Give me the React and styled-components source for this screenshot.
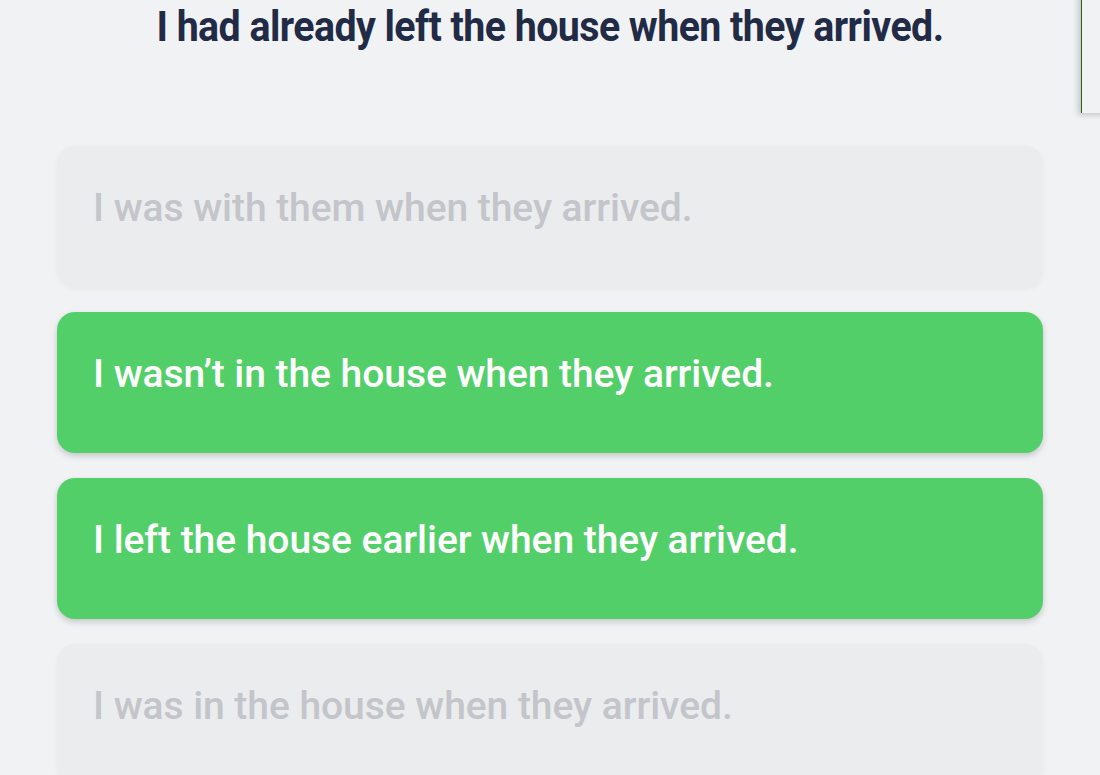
import React from "react";
import styled, { createGlobalStyle } from "styled-components";

const Global = createGlobalStyle`
  html, body { margin: 0; padding: 0; background: #f1f2f4; }
  body { font-family: Roboto, "Noto Sans", sans-serif; overflow: hidden; }
`;

const Page = styled.div`
  position: relative;
  width: 1100px;
  height: 775px;
  overflow: hidden;
  background: #f1f2f4;
`;

const Question = styled.h1`
  margin: 0;
  padding-top: 0px;
  height: 146px;
  box-sizing: border-box;
  text-align: center;
  font-family: Roboto, sans-serif;
  font-weight: 700;
  font-size: 42px;
  line-height: 54px;
  letter-spacing: -0.6px;
  color: #222b45;
  transform: scaleX(0.937);
`;

const Options = styled.div`
  display: flex;
  flex-direction: column;
  gap: 25px;
  padding: 0 57px;
`;

const Option = styled.div`
  box-sizing: border-box;
  height: 141px;
  border-radius: 18px;
  padding: 38px 36px 0;
  font-family: Roboto, sans-serif;
  font-weight: 500;
  font-size: 39px;
  line-height: 48px;
  letter-spacing: -0.05px;
  background: ${(p) => (p.$correct ? "#53cf6a" : "#ebecee")};
  color: ${(p) => (p.$correct ? "#ffffff" : "#c3c5ca")};
  box-shadow: ${(p) =>
    p.$correct
      ? "0 3px 6px rgba(0,0,0,0.18)"
      : "0 2px 6px rgba(0,0,0,0.04)"};
`;

const SidePanel = styled.div`
  position: absolute;
  top: -10px;
  left: 1081px;
  width: 40px;
  height: 123px;
  background: #f1f2f4;
  border-left: 1px solid #2f5d12;
  box-shadow: -3px 2px 6px rgba(0,0,0,0.18);
`;

const options = [
  { text: "I was with them when they arrived.", correct: false },
  { text: "I wasn\u2019t in the house when they arrived.", correct: true },
  { text: "I left the house earlier when they arrived.", correct: true },
  { text: "I was in the house when they arrived.", correct: false },
];

export default function App() {
  return (
    <Page>
      <Global />
      <Question>I had already left the house when they arrived.</Question>
      <Options>
        {options.map((o) => (
          <Option key={o.text} $correct={o.correct}>
            {o.text}
          </Option>
        ))}
      </Options>
      <SidePanel />
    </Page>
  );
}
